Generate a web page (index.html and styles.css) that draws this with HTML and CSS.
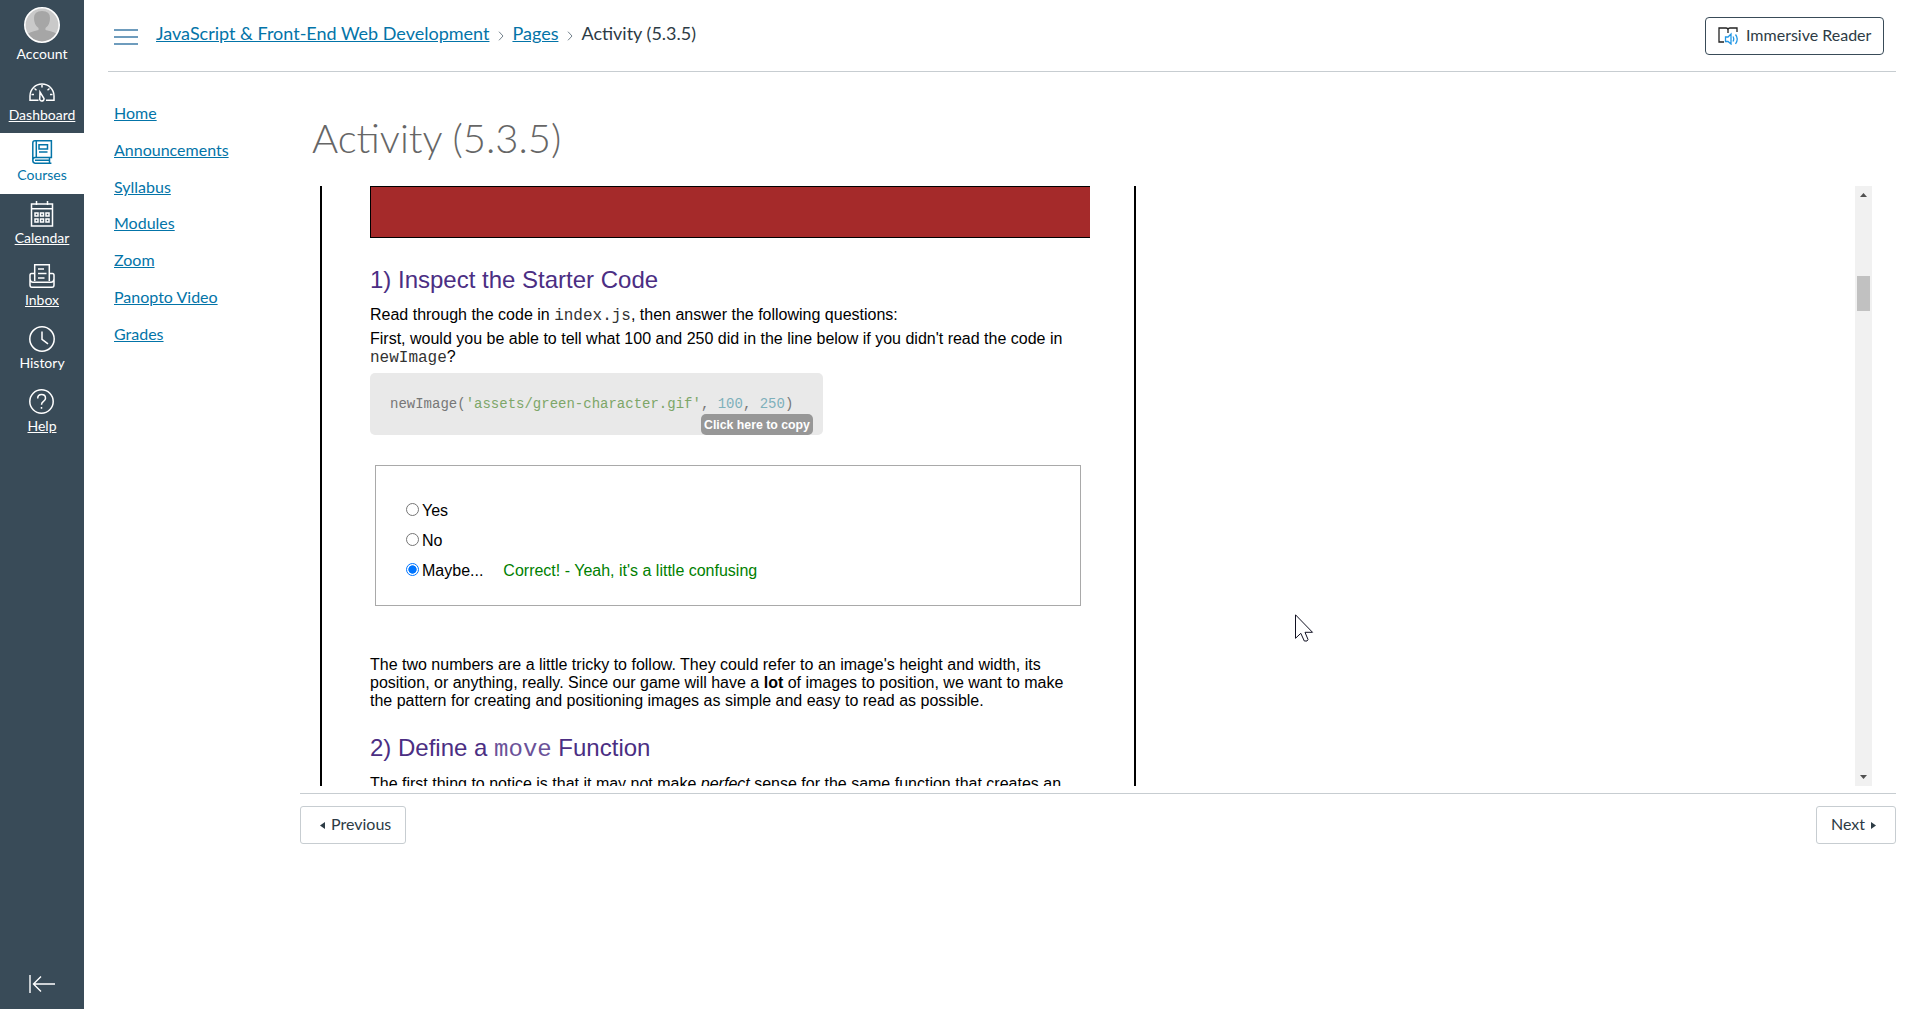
FILE: index.html
```html
<!DOCTYPE html>
<html lang="en">
<head>
<meta charset="utf-8">
<title>Activity (5.3.5)</title>
<link rel="stylesheet" href="styles.css">
</head>
<body>
<div class="app">
  <nav class="global-nav">
    <a class="nav-item account">
      <svg class="avatar" viewBox="0 0 36 36"><defs><clipPath id="face"><circle cx="18" cy="18" r="17"/></clipPath></defs><circle cx="18" cy="18" r="17" fill="#c9c9c9"/><g clip-path="url(#face)" fill="#a6a6a6"><path d="M10 11Q10 4 18 4T26 11Q26 18 21.500 21V23Q33 25 34 29V36H2V29Q4 25 14.500 23V21Q10 18 10 11Z"/></g><circle cx="18" cy="18" r="17.200" fill="none" stroke="#fff" stroke-width="1.600"/></svg>
      <span>Account</span>
    </a>
    <a class="nav-item dashboard underlined">
      <svg viewBox="0 0 26 26"><path d="M9.500 20.200H1V16A12 12 0 0 1 25 16V20.200H17M13 5V7.500M5.500 8.500L7.500 10.200M20.500 8.500L18.500 10.200M2.500 14.500H5M21 14.500H23.500M11 12L10.800 18A2.200 2.200 0 1 0 15 18.500Z"/></svg>
      <span>Dashboard</span>
    </a>
    <a class="nav-item courses active">
      <svg viewBox="0 0 26 26"><path d="M6 .8H22.400V17.500H6Q3.800 17.500 3.800 20.300T6 23.200H22.400M6 .8Q3.800 .8 3.800 3V20.300M7.300 .8V17.500M20.500 17.500V23M10 4.700H18.500V9H10ZM10 12H18.500M6 20.300H20"/></svg>
      <span>Courses</span>
    </a>
    <a class="nav-item calendar underlined">
      <svg viewBox="0 0 26 26"><path d="M2.500 3H23.500V25H2.500ZM2.500 7.800H23.500M7.500 0V4M18.500 0V4M6 12h3v3H6zM11.500 12h3v3h-3zM17 12h3v3h-3zM6 18h3v3H6zM11.500 18h3v3h-3zM17 18h3v3h-3z"/></svg>
      <span>Calendar</span>
    </a>
    <a class="nav-item inbox underlined">
      <svg viewBox="0 0 26 26"><path d="M5.700 17V.8H20.300V17M5.700 9.500H2.500Q1 9.500 1 11.500V21Q1 23.300 3 23.300H23Q25 23.300 25 21V11.500Q25 9.500 23.500 9.500H20.300M1 15Q1.500 18.300 4 18.300H22Q24.500 18.300 25 15M9 5H15M9 9.500H17.500M9 14H15.500"/></svg>
      <span>Inbox</span>
    </a>
    <a class="nav-item history">
      <svg viewBox="0 0 26 26"><circle cx="13" cy="13" r="12.200"/><path d="M13 5.500V13.300L19 17.800"/></svg>
      <span>History</span>
    </a>
    <a class="nav-item help underlined">
      <svg viewBox="0 0 26 26"><circle cx="12.500" cy="12.500" r="11.700"/><path d="M8.700 9.500Q8.700 5.600 12.600 5.600T16.500 9.200Q16.500 11 14.500 12.300T12.500 15.700M12.500 18V19.800"/></svg>
      <span>Help</span>
    </a>
    <svg class="collapse" viewBox="0 0 26 20"><path d="M1 1V19M26 10H4.500M12 2.500L4.500 10L12 17.500"/></svg>
  </nav>

  <div class="page">
    <header class="topbar">
      <svg class="burger" viewBox="0 0 24 16"><path d="M0 1H24M0 8H24M0 15H24"/></svg>
      <div class="crumbs">
        <a>JavaScript &amp; Front-End Web Development</a>
        <svg viewBox="0 0 6 10"><path d="M1 .7L5 5L1 9.300"/></svg>
        <a>Pages</a>
        <svg viewBox="0 0 6 10"><path d="M1 .7L5 5L1 9.300"/></svg>
        <span>Activity (5.3.5)</span>
      </div>
      <button class="reader">
        <svg viewBox="0 0 21 18"><path class="book" d="M6 15H1V1H8Q10 1 10 3V6M10 3Q10 1 12 1H19V5"/><path class="sound" d="M7.500 10H10L13 7V17L10 14.500H7.500ZM15 9.500Q16.500 12 15 14.500M17.500 7.500Q21 12 17.500 17"/></svg>
        <span>Immersive Reader</span>
      </button>
    </header>

    <div class="body">
      <ul class="course-menu">
        <li><a>Home</a></li>
        <li><a>Announcements</a></li>
        <li><a>Syllabus</a></li>
        <li><a>Modules</a></li>
        <li><a>Zoom</a></li>
        <li><a>Panopto Video</a></li>
        <li><a>Grades</a></li>
      </ul>
      <main class="content">
        <h1>Activity (5.3.5)</h1>
        <div class="frame">
          <article class="lesson">
            <div class="banner"></div>
            <h2>1) Inspect the Starter Code</h2>
            <p class="intro">Read through the code in <code>index.js</code>, then answer the following questions:</p>
            <p class="question">First, would you be able to tell what 100 and 250 did in the line below if you didn't read the code in <code>newImage</code>?</p>
            <div class="snippet">
              <pre>newImage(<span class="str">'assets/green-character.gif'</span>, <span class="num">100</span>, <span class="num">250</span>)</pre>
              <button class="copy">Click here to copy</button>
            </div>
            <div class="quiz">
              <label><i class="radio"></i>Yes</label>
              <label><i class="radio"></i>No</label>
              <label><i class="radio checked"></i>Maybe...<em>Correct! - Yeah, it's a little confusing</em></label>
            </div>
            <p class="explain">The two numbers are a little tricky to follow. They could refer to an image's height and width, its position, or anything, really. Since our game will have a <b>lot</b> of images to position, we want to make the pattern for creating and positioning images as simple and easy to read as possible.</p>
            <h2 class="second">2) Define a <code>move</code> Function</h2>
            <p class="next-text">The first thing to notice is that it may not make <i>perfect</i> sense for the same function that creates an</p>
          </article>
          <div class="scrollbar">
            <svg viewBox="0 0 17 17"><path d="M5 11L8.500 7L12 11Z"/></svg>
            <div class="thumb"></div>
            <svg class="down" viewBox="0 0 17 17"><path d="M5 6L8.500 10L12 6Z"/></svg>
          </div>
        </div>
        <footer class="pager">
          <a class="prev"><svg viewBox="0 0 5 7"><path d="M5 0V7L0 3.500Z"/></svg><span>Previous</span></a>
          <a class="next"><span>Next</span><svg viewBox="0 0 5 7"><path d="M0 0V7L5 3.500Z"/></svg></a>
        </footer>
      </main>
    </div>
  </div>
</div>
<svg class="cursor" viewBox="0 0 19 28"><path d="M.5 .8V24.300L5.800 19.300L9.300 27H12L13 25.500L10 18.300H17.500Z"/></svg>
</body>
</html>
```

FILE: styles.css
```css
* { box-sizing: border-box; }
body { margin: 0; font-family: Lato, sans-serif; font-size: 16px; color: #2d3b45; background: #fff; overflow: hidden; }
.app { display: flex; height: 1009px; }

.global-nav { width: 84px; background: #394b58; display: flex; flex-direction: column; flex: none; }
.nav-item { display: flex; flex-direction: column; align-items: center; height: 63px; padding-top: 7px; gap: 2px; color: #fff; font-size: 14px; line-height: 18px; }
.nav-item svg { width: 26px; height: 26px; flex: none; fill: none; stroke: currentColor; stroke-width: 1.5; overflow: visible; }
.nav-item .avatar { width: 36px; height: 36px; stroke: none; }
.underlined span { text-decoration: underline; }
.account { height: 72px; }
.dashboard { height: 61px; padding-top: 8px; gap: 0; }
.courses { height: 61px; gap: 0; }
.inbox { gap: 1px; height: 62px; }
.active { background: #fff; color: #0374a8; }
.collapse { width: 26px; height: 20px; margin: auto 0 15px 29px; fill: none; stroke: #fff; stroke-width: 1.4; }

.page { flex: 1; padding: 0 24px; display: flex; flex-direction: column; }
.topbar { height: 72px; display: flex; align-items: flex-start; border-bottom: 1px solid #c7cdd1; }
.burger { width: 24px; height: 16px; margin: 29px 18px 0 6px; stroke: #3f7ca8; stroke-width: 1.6; flex: none; }
.crumbs { display: flex; align-items: center; padding-top: 22px; font-size: 18px; line-height: 22px; white-space: nowrap; }
.crumbs a { color: #0374a8; text-decoration: underline; }
.crumbs svg { width: 6px; height: 10px; margin: 5px 8px 0 9px; fill: none; stroke: #73818c; stroke-width: 1; }
.reader { margin: 17px 12px 0 auto; width: 179px; height: 38px; border: 1px solid #394b58; border-radius: 4px; background: #fff; padding: 0 0 0 12px; display: flex; align-items: center; gap: 7px; color: #2d3b45; font: 16px Lato, sans-serif; white-space: nowrap; }
.reader span, .pager span { padding-bottom: 4px; }
.reader svg { width: 21px; height: 18px; fill: none; stroke-width: 1.3; }
.book { stroke: #222; }
.sound { stroke: #2197e5; }

.body { display: flex; flex: 1; }
.course-menu { list-style: none; margin: 0; padding: 22px 0 0 6px; width: 192px; }
.course-menu li { height: 36.8px; line-height: 37px; }
.course-menu a { color: #0374a8; text-decoration: underline; }
.content { flex: 1; min-width: 0; }
h1 { margin: 0; padding: 39px 0 0 12px; height: 114px; font-size: 40px; line-height: 54px; font-weight: 300; color: #666; }

.frame { height: 600px; margin: 0 24px 0 20px; display: flex; justify-content: space-between; overflow: hidden; }
.lesson { width: 816px; height: 620px; padding: 0 0 0 48px; border: solid #000; border-width: 0 2px; font: 16px/18px "Liberation Sans", Arial, sans-serif; color: #000; }
.lesson code { font-family: "Liberation Mono", monospace; color: #333; line-height: 1; }
.banner { width: 720px; height: 52px; background: #a52a2a; border: 1px solid #000; border-right: 0; }
h2 { margin: 28px 0 0; font-size: 24px; line-height: 28px; font-weight: 400; color: #4b2e83; }
.lesson p { margin: 0; width: 715px; }
.lesson .intro { margin-top: 12px; }
.lesson .question { margin-top: 6px; }
.snippet { margin-top: 7px; width: 453px; height: 62px; padding: 21px 0 0 20px; background: #e9e9e9; border-radius: 5px; display: flex; flex-direction: column; }
.snippet pre { margin: 0; font: 14px/20px "Liberation Mono", monospace; color: #777; }
.snippet .str { color: #7da668; }
.snippet .num { color: #7eb0bb; }
.copy { align-self: flex-end; margin-right: 10px; width: 112px; height: 21px; border: 0; border-radius: 5px; padding: 0; background: #979797; color: #fff; font: bold 12.3px "Liberation Sans", sans-serif; white-space: nowrap; }
.quiz { margin: 30px 0 0 5px; width: 706px; height: 141px; border: 1px solid #a9a9a9; padding: 30px 0 0 30px; }
.quiz label { display: flex; align-items: center; height: 30px; }
.radio { width: 13px; height: 13px; border: 1px solid #767676; border-radius: 50%; margin: 0 3px 3px 0; }
.checked { border-color: #0075ff; background: radial-gradient(circle, #0075ff 3.8px, #fff 4.5px); }
.quiz em { font-style: normal; color: green; margin-left: 20px; }
.lesson .explain { margin-top: 50px; }
.second { margin-top: 24px; }
.second code { color: #6b5299; }
.lesson .next-text { margin-top: 13px; white-space: nowrap; }

.scrollbar { width: 17px; background: #f1f1f1; display: flex; flex-direction: column; align-items: center; }
.scrollbar svg { width: 17px; height: 17px; fill: #505050; }
.thumb { width: 13px; height: 35px; margin-top: 73px; background: #c1c1c1; }
.scrollbar .down { margin-top: auto; }

.pager { margin-top: 7px; border-top: 1px solid #c7cdd1; padding-top: 12px; display: flex; justify-content: space-between; }
.pager a { display: flex; align-items: center; height: 38px; border: 1px solid #c7cdd1; border-radius: 3px; }
.pager svg { width: 5px; height: 7px; fill: #2d3b45; }
.prev { width: 106px; padding-left: 19px; gap: 6px; }
.next { width: 80px; padding-left: 14px; gap: 6px; }

.cursor { position: absolute; left: 1295px; top: 614px; width: 19px; height: 28px; fill: #fff; stroke: #112; stroke-width: 1; }
```
